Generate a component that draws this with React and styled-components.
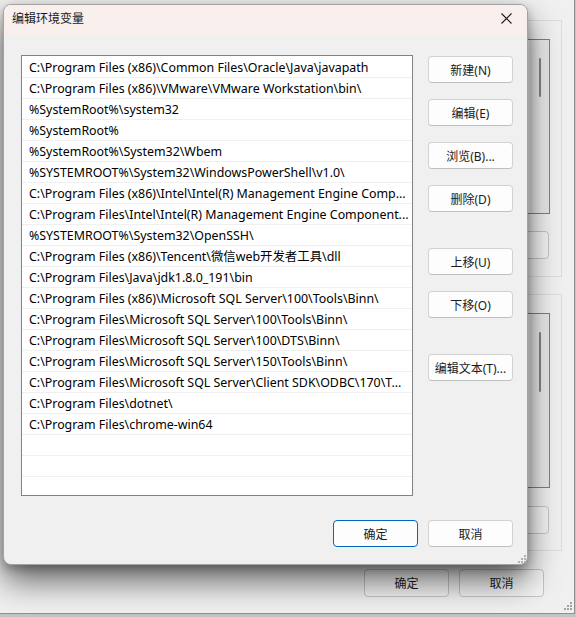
import React from 'react';
import styled, { createGlobalStyle } from 'styled-components';

const GlobalStyle = createGlobalStyle`
  html, body {
    margin: 0;
    padding: 0;
    background: #c4c4c4;
  }
  body {
    font-family: "Noto Sans", "Noto Sans CJK SC", sans-serif;
    font-size: 12px;
    color: #1b1b1b;
  }
`;

const PATHS = [
  'C:\\Program Files (x86)\\Common Files\\Oracle\\Java\\javapath',
  'C:\\Program Files (x86)\\VMware\\VMware Workstation\\bin\\',
  '%SystemRoot%\\system32',
  '%SystemRoot%',
  '%SystemRoot%\\System32\\Wbem',
  '%SYSTEMROOT%\\System32\\WindowsPowerShell\\v1.0\\',
  'C:\\Program Files (x86)\\Intel\\Intel(R) Management Engine Comp...',
  'C:\\Program Files\\Intel\\Intel(R) Management Engine Component...',
  '%SYSTEMROOT%\\System32\\OpenSSH\\',
  'C:\\Program Files (x86)\\Tencent\\微信web开发者工具\\dll',
  'C:\\Program Files\\Java\\jdk1.8.0_191\\bin',
  'C:\\Program Files (x86)\\Microsoft SQL Server\\100\\Tools\\Binn\\',
  'C:\\Program Files\\Microsoft SQL Server\\100\\Tools\\Binn\\',
  'C:\\Program Files\\Microsoft SQL Server\\100\\DTS\\Binn\\',
  'C:\\Program Files\\Microsoft SQL Server\\150\\Tools\\Binn\\',
  'C:\\Program Files\\Microsoft SQL Server\\Client SDK\\ODBC\\170\\T...',
  'C:\\Program Files\\dotnet\\',
  'C:\\Program Files\\chrome-win64',
  '',
  '',
];

const SIDE_BUTTONS = [
  { label: '新建(N)' },
  { label: '编辑(E)' },
  { label: '浏览(B)...' },
  { label: '删除(D)' },
  { label: '上移(U)', wide: true },
  { label: '下移(O)' },
  { label: '编辑文本(T)...', wide: true },
];

/* ---------- window behind (环境变量) ---------- */

const Screen = styled.div`
  position: relative;
  width: 576px;
  height: 617px;
  overflow: hidden;
`;

const ParentWindow = styled.div`
  position: relative;
  width: 575px;
  height: 614px;
  box-sizing: border-box;
  background: #f0f0f0;
  border-right: 1px solid #8f8f8f;
  border-bottom: 1px solid #8f8f8f;
  padding: 20px 12px 0 12px;
  display: flex;
  flex-direction: column;
`;

const GroupBox = styled.div`
  border: 1px solid #dcdcdc;
  padding: 18px 11px 0 11px;
  height: ${(p) => p.$height}px;
  box-sizing: border-box;
  margin-top: ${(p) => p.$top || 0}px;
  display: flex;
  flex-direction: column;
`;

const ParentList = styled.div`
  height: ${(p) => p.$height}px;
  border: 1px solid #7f7f7f;
  background: #ffffff;
  display: flex;
  justify-content: flex-end;
  box-sizing: border-box;
`;

const ScrollTrack = styled.div`
  width: 20px;
  border-left: 1px solid #f6f6f6;
  background: linear-gradient(90deg, #e4e4e4, #ededed 60%, #e6e6e6);
  display: flex;
  justify-content: center;
  padding-top: ${(p) => p.$thumbTop}px;
  box-sizing: border-box;
`;

const ScrollThumb = styled.div`
  width: 2px;
  height: ${(p) => p.$length}px;
  background: #858585;
  border-radius: 1px;
`;

const ParentButtonRow = styled.div`
  display: flex;
  justify-content: flex-end;
  gap: 10px;
  margin-top: ${(p) => p.$top}px;
  padding-right: ${(p) => p.$right}px;
`;

const ParentButton = styled.div`
  width: 85px;
  height: 28px;
  box-sizing: border-box;
  border: 1px solid #c4c4c4;
  border-radius: 4px;
  background: rgba(250, 250, 250, 0.4);
  display: flex;
  align-items: center;
  justify-content: center;
`;

const Grip = ({ color = '#a3a3a3' }) => (
  <svg width="9" height="9" viewBox="0 0 9 9">
    <rect x="7" y="1" width="2" height="2" fill={color} />
    <rect x="4" y="4" width="2" height="2" fill={color} />
    <rect x="7" y="4" width="2" height="2" fill={color} />
    <rect x="1" y="7" width="2" height="2" fill={color} />
    <rect x="4" y="7" width="2" height="2" fill={color} />
    <rect x="7" y="7" width="2" height="2" fill={color} />
  </svg>
);

const GripCorner = styled.div`
  position: absolute;
  right: ${(p) => p.$right}px;
  bottom: ${(p) => p.$bottom}px;
  line-height: 0;
`;

/* ---------- 编辑环境变量 dialog ---------- */

const Dialog = styled.div`
  position: absolute;
  left: 3px;
  top: 4px;
  width: 525px;
  height: 561px;
  box-sizing: border-box;
  background: #f0f0f0;
  border: 1px solid #a2a2a2;
  border-radius: 8px;
  box-shadow: 0 16px 32px rgba(0, 0, 0, 0.58), 0 4px 10px rgba(0, 0, 0, 0.25);
  display: flex;
  flex-direction: column;
  overflow: hidden;
`;

const TitleBar = styled.div`
  height: 30px;
  box-sizing: border-box;
  flex-shrink: 0;
  background: #f9efed;
  display: flex;
  align-items: center;
  justify-content: space-between;
  padding: 0 9px 4px 8px;
`;

const TitleText = styled.span`
  font-size: 12px;
  color: #1a1a1a;
`;

const CloseIcon = () => (
  <svg width="11" height="11" viewBox="0 0 11 11">
    <path d="M0.5 0.5 L10.5 10.5 M10.5 0.5 L0.5 10.5" stroke="#1a1a1a" strokeWidth="1.1" fill="none" />
  </svg>
);

const CloseButton = styled.div`
  width: 24px;
  height: 24px;
  display: flex;
  align-items: center;
  justify-content: center;
`;

const Body = styled.div`
  flex: 1;
  display: flex;
  flex-direction: column;
  padding: 20px 14px 0 17px;
`;

const MainRow = styled.div`
  display: flex;
  gap: 15px;
`;

const PathList = styled.div`
  flex: 1;
  height: 441px;
  box-sizing: border-box;
  border: 1px solid #828282;
  background: #ffffff;
  padding-top: 1px;
  overflow: hidden;
`;

const PathRow = styled.div`
  height: 20px;
  border-bottom: 1px solid #f0f0f0;
  padding: 0 6px 0 7px;
  display: flex;
  align-items: center;
  white-space: nowrap;
  overflow: hidden;
  text-overflow: ellipsis;
  color: #000000;
  font-size: 12.4px;
`;

const ButtonColumn = styled.div`
  width: 85px;
  display: flex;
  flex-direction: column;
  padding-top: 1px;
`;

const Button = styled.div`
  width: 85px;
  height: 27px;
  box-sizing: border-box;
  flex-shrink: 0;
  margin-top: ${(p) => p.$top || 0}px;
  border: 1px solid ${(p) => (p.$primary ? '#0067c0' : '#d2d2d2')};
  border-bottom-color: ${(p) => (p.$primary ? '#0067c0' : '#c0c0c0')};
  border-radius: 4px;
  background: #fdfdfd;
  display: flex;
  align-items: center;
  justify-content: center;
  color: #1b1b1b;
  font-size: 12px;
  white-space: nowrap;
`;

const FooterRow = styled.div`
  display: flex;
  justify-content: flex-end;
  gap: 10px;
  margin-top: 24px;
`;

export default function App() {
  return (
    <>
      <GlobalStyle />
      <Screen>
        <ParentWindow>
          <GroupBox $height={257}>
            <ParentList $height={175}>
              <ScrollTrack $thumbTop={18}>
                <ScrollThumb $length={39} />
              </ScrollTrack>
            </ParentList>
            <ParentButtonRow $top={17} $right={1}>
              <ParentButton />
            </ParentButtonRow>
          </GroupBox>
          <GroupBox $height={257} $top={17}>
            <ParentList $height={175}>
              <ScrollTrack $thumbTop={18}>
                <ScrollThumb $length={60} />
              </ScrollTrack>
            </ParentList>
            <ParentButtonRow $top={18} $right={1}>
              <ParentButton />
            </ParentButtonRow>
          </GroupBox>
          <ParentButtonRow $top={18} $right={18}>
            <ParentButton>确定</ParentButton>
            <ParentButton>取消</ParentButton>
          </ParentButtonRow>
          <GripCorner $right={2} $bottom={3}>
            <Grip />
          </GripCorner>
        </ParentWindow>

        <Dialog>
          <TitleBar>
            <TitleText>编辑环境变量</TitleText>
            <CloseButton>
              <CloseIcon />
            </CloseButton>
          </TitleBar>
          <Body>
            <MainRow>
              <PathList>
                {PATHS.map((path, i) => (
                  <PathRow key={i}>{path}</PathRow>
                ))}
              </PathList>
              <ButtonColumn>
                {SIDE_BUTTONS.map((b, i) => (
                  <Button key={b.label} $top={i === 0 ? 0 : b.wide ? 36 : 16}>
                    {b.label}
                  </Button>
                ))}
              </ButtonColumn>
            </MainRow>
            <FooterRow>
              <Button $primary>确定</Button>
              <Button>取消</Button>
            </FooterRow>
          </Body>
          <GripCorner $right={1} $bottom={1}>
            <Grip color="#b0b0b0" />
          </GripCorner>
        </Dialog>
      </Screen>
    </>
  );
}
